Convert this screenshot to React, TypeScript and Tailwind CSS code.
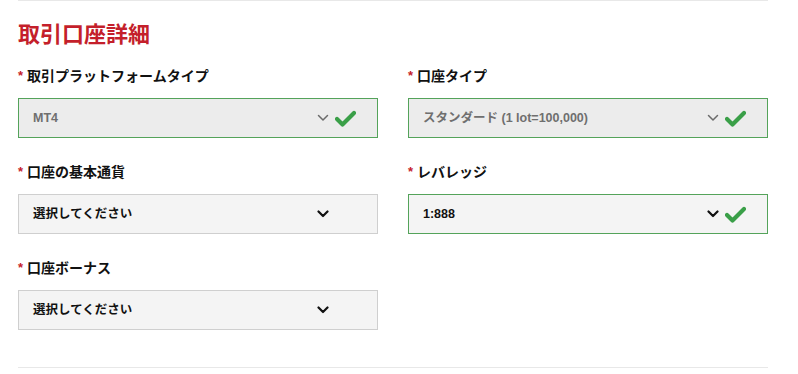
const FONT = "font-['Liberation_Sans','Noto_Sans_CJK_JP',sans-serif]";

interface Field {
  label: string;
  value: string;
  disabled?: boolean;
  valid?: boolean;
}

const fields: (Field | null)[] = [
  { label: "取引プラットフォームタイプ", value: "MT4", disabled: true, valid: true },
  { label: "口座タイプ", value: "スタンダード (1 lot=100,000)", disabled: true, valid: true },
  { label: "口座の基本通貨", value: "選択してください" },
  { label: "レバレッジ", value: "1:888", valid: true },
  { label: "口座ボーナス", value: "選択してください" },
  null,
];

function Chevron({ muted }: { muted?: boolean }) {
  return (
    <svg width="12" height="8" viewBox="0 0 12 8" fill="none">
      <path
        d="M1.5 1.5 L6 6 L10.5 1.5"
        stroke={muted ? "#6b6b6b" : "#111"}
        strokeWidth={muted ? 1.5 : 2.2}
        strokeLinecap="round"
        strokeLinejoin="round"
      />
    </svg>
  );
}

function Check() {
  return (
    <svg width="21" height="17" viewBox="0 0 21 17">
      <path
        d="M2 9 L7.5 14.5 L19 3"
        stroke="#3a9f48"
        strokeWidth="4.2"
        fill="none"
        strokeLinecap="round"
        strokeLinejoin="round"
      />
    </svg>
  );
}

function SelectField({ field }: { field: Field }) {
  const border = field.valid ? "border-[#54a35a]" : "border-[#cfcfcf]";
  const bg = field.disabled ? "bg-[#ececec]" : "bg-[#f4f4f4]";
  const text = field.disabled ? "text-[#6f6f6f]" : "text-[#111]";
  return (
    <div>
      <p className="flex h-5 items-center text-[14px] font-bold leading-5 text-[#111]">
        <span className="mr-[4px] text-[13px] text-[#c5222b]">*</span>
        {field.label}
      </p>
      <div
        className={`mt-3 flex h-10 items-center justify-between border ${border} ${bg} pl-[14px] pr-[21px]`}
      >
        <span className={`text-[12.5px] font-bold ${text}`}>{field.value}</span>
        <div className="flex items-center gap-[6px]">
          <Chevron muted={field.disabled} />
          <div className="flex w-[21px] justify-center">
            {field.valid ? <Check /> : null}
          </div>
        </div>
      </div>
    </div>
  );
}

export default function App() {
  return (
    <div className={`h-[374px] w-[798px] bg-white ${FONT}`}>
      <div className="ml-[18px] w-[750px]">
        <div className="border-t border-[#e8e8e8]" />
        <h2 className="mt-[19px] h-[30px] text-[22px] font-bold leading-[30px] text-[#c41f2b]">
          取引口座詳細
        </h2>
        <div className="mt-[16px] grid grid-cols-2 gap-x-[30px] gap-y-6">
          {fields.map((f, i) =>
            f ? <SelectField key={i} field={f} /> : <div key={i} />
          )}
        </div>
        <div className="mt-[37px] border-t border-[#e8e8e8]" />
      </div>
    </div>
  );
}
